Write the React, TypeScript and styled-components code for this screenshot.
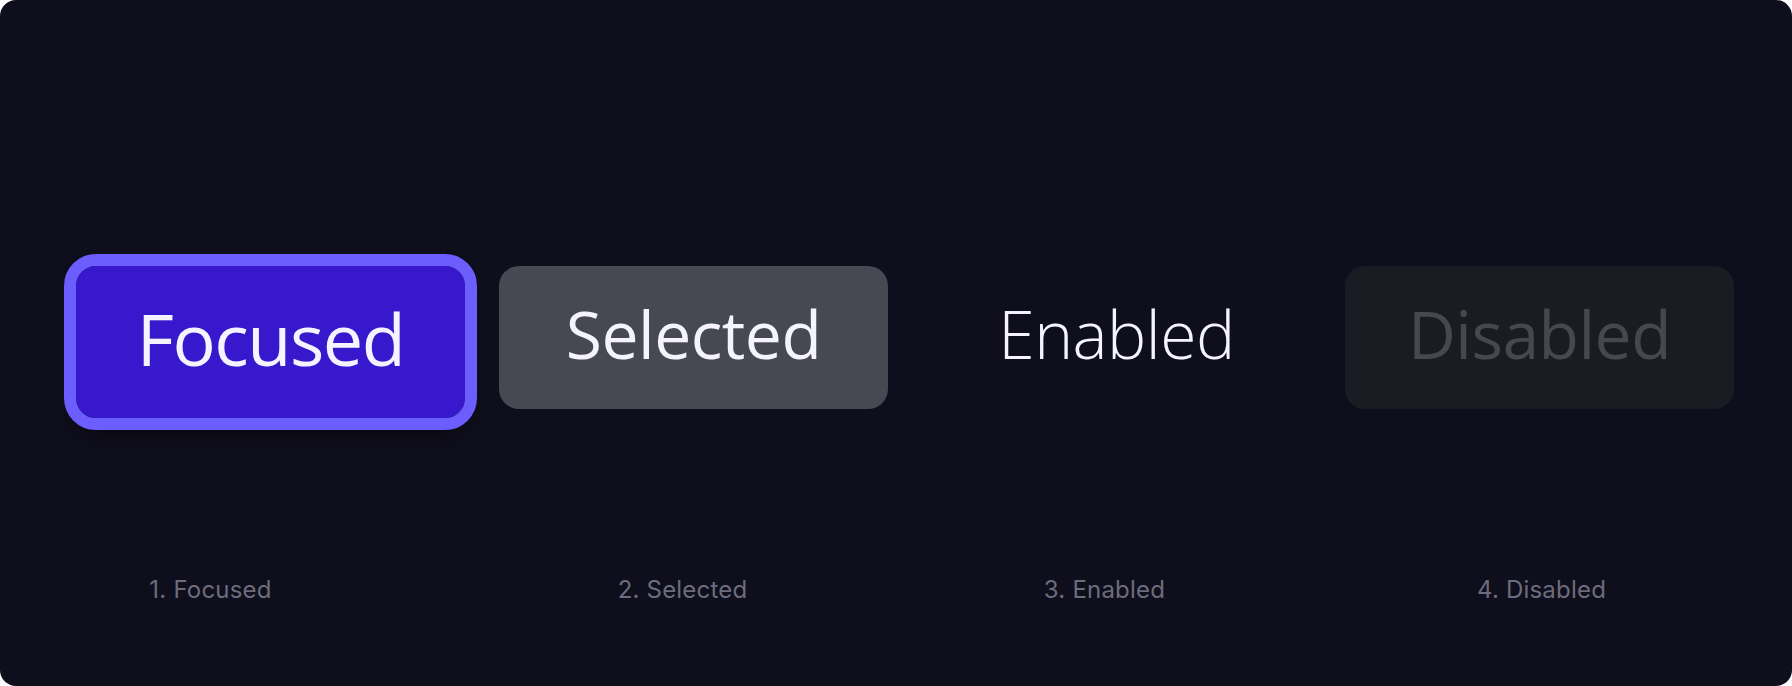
import React from "react";
import styled, { createGlobalStyle, css } from "styled-components";

const GlobalStyle = createGlobalStyle`
  html, body {
    margin: 0;
    padding: 0;
    background: #ffffff;
  }
  * {
    box-sizing: border-box;
  }
`;

const Card = styled.div`
  width: 1792px;
  height: 686px;
  background: #0f0e1c;
  border-radius: 16px;
  padding: 266px 59px 0 76px;
  display: flex;
  flex-direction: column;
`;

const Row = styled.div`
  display: grid;
  grid-template-columns: repeat(4, 389px);
  column-gap: 34px;
  align-items: start;
`;

type Variant = "focused" | "selected" | "enabled" | "disabled";

const variants = {
  focused: css`
    height: 152px;
    background: #3718cd;
    color: #f4f3ff;
    font-size: 72px;
    letter-spacing: -1.5px;
    outline: 12px solid #6c5dff;
    box-shadow: 0 14px 26px rgba(0, 0, 0, 0.55);
    padding-bottom: 9px;
  `,
  selected: css`
    background: #464852;
    color: #f4f3ff;
  `,
  enabled: css`
    background: transparent;
    color: #f4f3ff;
    font-weight: 300;
  `,
  disabled: css`
    background: #1b1c23;
    color: #46474f;
  `,
};

const StateButton = styled.button<{ $variant: Variant }>`
  height: 143px;
  width: 100%;
  border: none;
  border-radius: 20px;
  display: flex;
  align-items: center;
  justify-content: center;
  font-family: "Open Sans", "Noto Sans", sans-serif;
  font-size: 66px;
  font-weight: 400;
  letter-spacing: -0.5px;
  padding: 0 0 10px;
  ${(p) => variants[p.$variant]}
`;

const Labels = styled.div`
  display: grid;
  grid-template-columns: repeat(4, 389px);
  column-gap: 34px;
  margin-top: 158px;
`;

const Label = styled.span<{ $shift: number }>`
  justify-self: center;
  transform: translateX(${(p) => p.$shift}px);
  font-family: Inter, "Liberation Sans", sans-serif;
  font-size: 24px;
  letter-spacing: 0.2px;
  color: #6d6c7c;
  line-height: 28px;
`;

const states: { variant: Variant; text: string; shift: number }[] = [
  { variant: "focused", text: "Focused", shift: -60 },
  { variant: "selected", text: "Selected", shift: -11 },
  { variant: "enabled", text: "Enabled", shift: -12 },
  { variant: "disabled", text: "Disabled", shift: 2 },
];

export default function App() {
  return (
    <>
      <GlobalStyle />
      <Card>
        <Row>
          {states.map((s) => (
            <StateButton key={s.variant} $variant={s.variant} disabled={s.variant === "disabled"}>
              {s.text}
            </StateButton>
          ))}
        </Row>
        <Labels>
          {states.map((s, i) => (
            <Label key={s.variant} $shift={s.shift}>
              {i + 1}. {s.text}
            </Label>
          ))}
        </Labels>
      </Card>
    </>
  );
}
